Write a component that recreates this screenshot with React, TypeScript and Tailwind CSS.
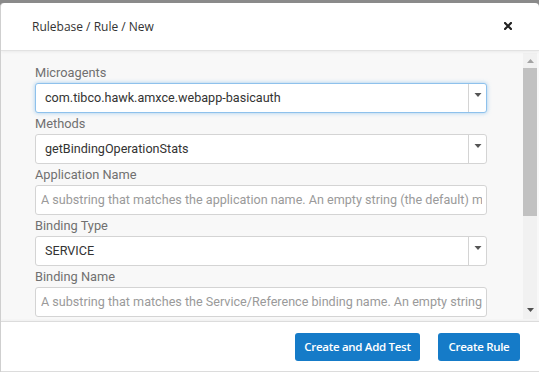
import React from "react";

function Caret() {
  return (
    <svg width="8" height="5" viewBox="0 0 8 5">
      <path d="M0.5 0 L7.5 0 L4 4 Z" fill="#555" />
    </svg>
  );
}

function Select({ value, focused }: { value: string; focused?: boolean }) {
  return (
    <div
      className={
        "flex h-[30px] w-[452px] items-stretch rounded-[3px] border bg-white " +
        (focused
          ? "border-[#8ec1ec] shadow-[0_0_4px_rgba(102,175,233,0.6)]"
          : "border-[#d4d4d4]")
      }
    >
      <div className="flex flex-1 items-center pl-[9px] text-[12.6px] text-[#333]">{value}</div>
      <div className="flex w-[18px] items-center justify-center border-l border-[#d4d4d4] pb-[5px]">
        <Caret />
      </div>
    </div>
  );
}

function TextInput({ placeholder }: { placeholder: string }) {
  return (
    <div className="flex h-[30px] w-[452px] items-center overflow-hidden whitespace-nowrap rounded-[3px] border border-[#d4d4d4] bg-white pl-[5px] pr-[4px] text-[12.6px] text-[#9a9a9a]">
      <span className="block overflow-hidden">{placeholder}</span>
    </div>
  );
}

function Label({ children }: { children: React.ReactNode }) {
  return <div className="flex h-[20px] items-center text-[12.8px] text-[#707070]">{children}</div>;
}

export default function App() {
  return (
    <div
      className="h-[372px] w-[539px] overflow-hidden bg-[#8a8a8a] pt-[3px]"
      style={{ fontFamily: "Roboto, 'Liberation Sans', sans-serif" }}
    >
      <div className="flex h-[369px] flex-col overflow-hidden rounded-t-[4px] border-l border-[#cfcfcf] bg-white">
        <div className="relative z-10 flex h-[48px] shrink-0 items-center justify-between border-b border-[#e2e2e2] pl-[31px] pr-[27px] shadow-[0_1px_3px_rgba(0,0,0,0.06)]">
          <div className="text-[12px] text-[#333]" style={{ fontFamily: "'Open Sans', sans-serif" }}>
            Rulebase / Rule / New
          </div>
          <svg width="8" height="8" viewBox="0 0 8 8" className="mb-[1px]">
            <path d="M1 1 L7 7 M7 1 L1 7" stroke="#222" strokeWidth="2.2" strokeLinecap="square" />
          </svg>
        </div>
        <div className="flex h-[270px] shrink-0 bg-[#f8f8f8]">
          <div className="flex flex-1 flex-col gap-[1px] overflow-hidden pl-[34px] pt-[12px]">
            <div>
              <Label>Microagents</Label>
              <Select value="com.tibco.hawk.amxce.webapp-basicauth" focused />
            </div>
            <div>
              <Label>Methods</Label>
              <Select value="getBindingOperationStats" />
            </div>
            <div>
              <Label>Application Name</Label>
              <TextInput placeholder="A substring that matches the application name. An empty string (the default) matches all applications." />
            </div>
            <div>
              <Label>Binding Type</Label>
              <Select value="SERVICE" />
            </div>
            <div>
              <Label>Binding Name</Label>
              <TextInput placeholder="A substring that matches the Service/Reference binding name. An empty string (the default) matches all." />
            </div>
          </div>
          <div className="my-[2px] mr-[2px] flex w-[14px] flex-col items-center bg-[#f1f1f1]">
            <div className="flex h-[15px] items-center justify-center">
              <svg width="7" height="4" viewBox="0 0 7 4">
                <path d="M0 4 L7 4 L3.5 0 Z" fill="#a3a3a3" />
              </svg>
            </div>
            <div className="h-[148px] w-[14px] bg-[#c1c1c1]" />
            <div className="flex-1" />
            <div className="flex h-[15px] items-center justify-center pb-[4px]">
              <svg width="7" height="4" viewBox="0 0 7 4">
                <path d="M0 0 L7 0 L3.5 4 Z" fill="#505050" />
              </svg>
            </div>
          </div>
        </div>
        <div className="flex flex-1 items-center justify-end gap-[18px] border-t border-b border-[#dcdcdc] pr-[19px] shadow-[0_-1px_2px_rgba(0,0,0,0.04)]">
          <button
            className="h-[28px] w-[125px] rounded-[3px] bg-[#157bc8] text-[11.5px] font-semibold tracking-[-0.3px] text-white"
            style={{ fontFamily: "'Open Sans', sans-serif" }}
          >
            Create and Add Test
          </button>
          <button
            className="h-[28px] w-[82px] rounded-[3px] bg-[#157bc8] text-[11.5px] font-semibold tracking-[-0.3px] text-white"
            style={{ fontFamily: "'Open Sans', sans-serif" }}
          >
            Create Rule
          </button>
        </div>
      </div>
    </div>
  );
}
